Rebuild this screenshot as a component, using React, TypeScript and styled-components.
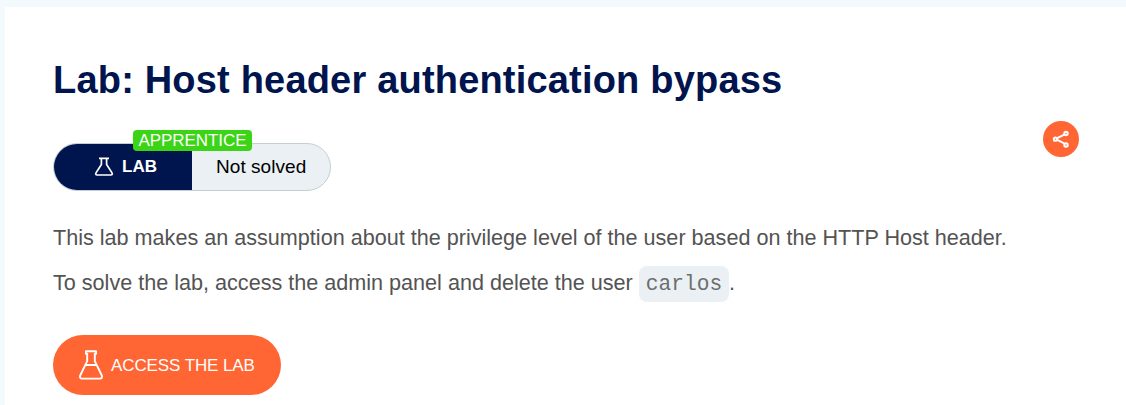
import React from "react";
import styled, { createGlobalStyle } from "styled-components";

const GlobalStyle = createGlobalStyle`
  * { box-sizing: border-box; }
  body {
    margin: 0;
    background: #f2fafd;
    font-family: "Liberation Sans", Arial, Helvetica, sans-serif;
    overflow: hidden;
  }
`;

const Page = styled.div`
  padding: 7px 0 0 5px;
  height: 405px;
`;

const Card = styled.main`
  height: 398px;
  padding: 51px 47px 0 48px;
  background: #fff;
`;

const Title = styled.h1`
  margin: 0;
  color: #00144d;
  font-size: 38px;
  line-height: 44px;
  font-weight: 700;
  letter-spacing: 0.19px;
  white-space: nowrap;
`;

const StatusRow = styled.div`
  display: flex;
  justify-content: space-between;
  align-items: flex-start;
  height: 70px;
  margin-top: 19px;
`;

const Status = styled.div`
  position: relative;
  display: flex;
  width: 278px;
  height: 48px;
  margin-top: 22px;
  border: 1px solid #c5cfd2;
  border-radius: 24px;
  background: #eaf0f3;
`;

const StatusType = styled.div`
  display: flex;
  align-items: center;
  width: 138px;
  padding-left: 40px;
  gap: 8px;
  border-radius: 23px 0 0 23px;
  background: #00144d;
  color: #fff;
  font-size: 17px;
  font-weight: 700;
`;

const StatusState = styled.div`
  flex: 1;
  padding-left: 24px;
  color: #000;
  font-size: 19px;
  line-height: 46px;
  letter-spacing: 0.05px;
  white-space: nowrap;
`;

const Level = styled.span`
  position: absolute;
  left: 79px;
  top: -14px;
  width: 119px;
  height: 21px;
  border-radius: 4px;
  background: #3bd416;
  color: #fff;
  font-size: 17px;
  line-height: 21px;
  letter-spacing: -0.05px;
  text-align: center;
`;

const ShareButton = styled.button`
  display: flex;
  align-items: center;
  justify-content: center;
  width: 36px;
  height: 36px;
  padding: 0;
  border: 0;
  border-radius: 50%;
  background: #ff6633;
`;

const Paragraph = styled.p`
  margin: 0;
  height: 45px;
  color: #535353;
  font-size: 21.6px;
  line-height: 45px;
  white-space: nowrap;
`;

const Description = styled.div`
  margin-top: 24px;
`;

const Code = styled.code`
  display: inline-block;
  height: 36px;
  padding: 0 7px;
  border-radius: 8px;
  background: #eaf0f3;
  color: #6a6e70;
  font-family: "Liberation Mono", "Courier New", monospace;
  font-size: 21.2px;
  line-height: 37px;
`;

const AccessButton = styled.a`
  display: flex;
  align-items: center;
  width: 228px;
  height: 60px;
  margin-top: 30px;
  padding-left: 26px;
  gap: 8px;
  border-radius: 30px;
  background: #ff6633;
  color: #fff;
  font-size: 17px;
  letter-spacing: -0.1px;
  white-space: nowrap;

  span {
    padding-top: 1px;
  }
`;

const SmallFlask = () => (
  <svg width="20" height="20" viewBox="0 0 20 20" fill="none" stroke="#fff" strokeWidth="1.7">
    <path d="M5 1.4H15M7.4 1.5V7.5L2 15.8Q1 18 3.2 18H16.8Q19 18 18 15.8L12.6 7.5V1.5" />
  </svg>
);

const LargeFlask = () => (
  <svg width="24" height="30" viewBox="0 0 24 30" fill="none" stroke="#fff" strokeWidth="1.9" strokeLinejoin="round">
    <path d="M6.9 1.2H17.1V3.8H15.8V11.2L22.8 25.5Q23.7 28.6 21 28.6H3Q.3 28.6 1.2 25.5L8.2 11.2V3.8H6.9ZM6.6 15H17.4" />
  </svg>
);

const ShareIcon = () => (
  <svg width="18" height="18" viewBox="0 0 18 18" fill="none" stroke="#fff" strokeWidth="2">
    <path d="M5.2 8.2L12.2 4.6M5.2 9.8L12.2 13.4" />
    <circle cx="3.4" cy="9.2" r="1.6" />
    <circle cx="14" cy="3.5" r="1.7" />
    <circle cx="14" cy="15" r="1.7" />
  </svg>
);

export default function App() {
  return (
    <Page>
      <GlobalStyle />
      <Card>
        <Title>Lab: Host header authentication bypass</Title>
        <StatusRow>
          <Status>
            <StatusType>
              <SmallFlask />
              <span>LAB</span>
            </StatusType>
            <StatusState>Not solved</StatusState>
            <Level>APPRENTICE</Level>
          </Status>
          <ShareButton aria-label="Share">
            <ShareIcon />
          </ShareButton>
        </StatusRow>
        <Description>
          <Paragraph>
            This lab makes an assumption about the privilege level of the user based on the HTTP Host header.
          </Paragraph>
          <Paragraph>
            To solve the lab, access the admin panel and delete the user <Code>carlos</Code>.
          </Paragraph>
        </Description>
        <AccessButton>
          <LargeFlask />
          <span>ACCESS THE LAB</span>
        </AccessButton>
      </Card>
    </Page>
  );
}
